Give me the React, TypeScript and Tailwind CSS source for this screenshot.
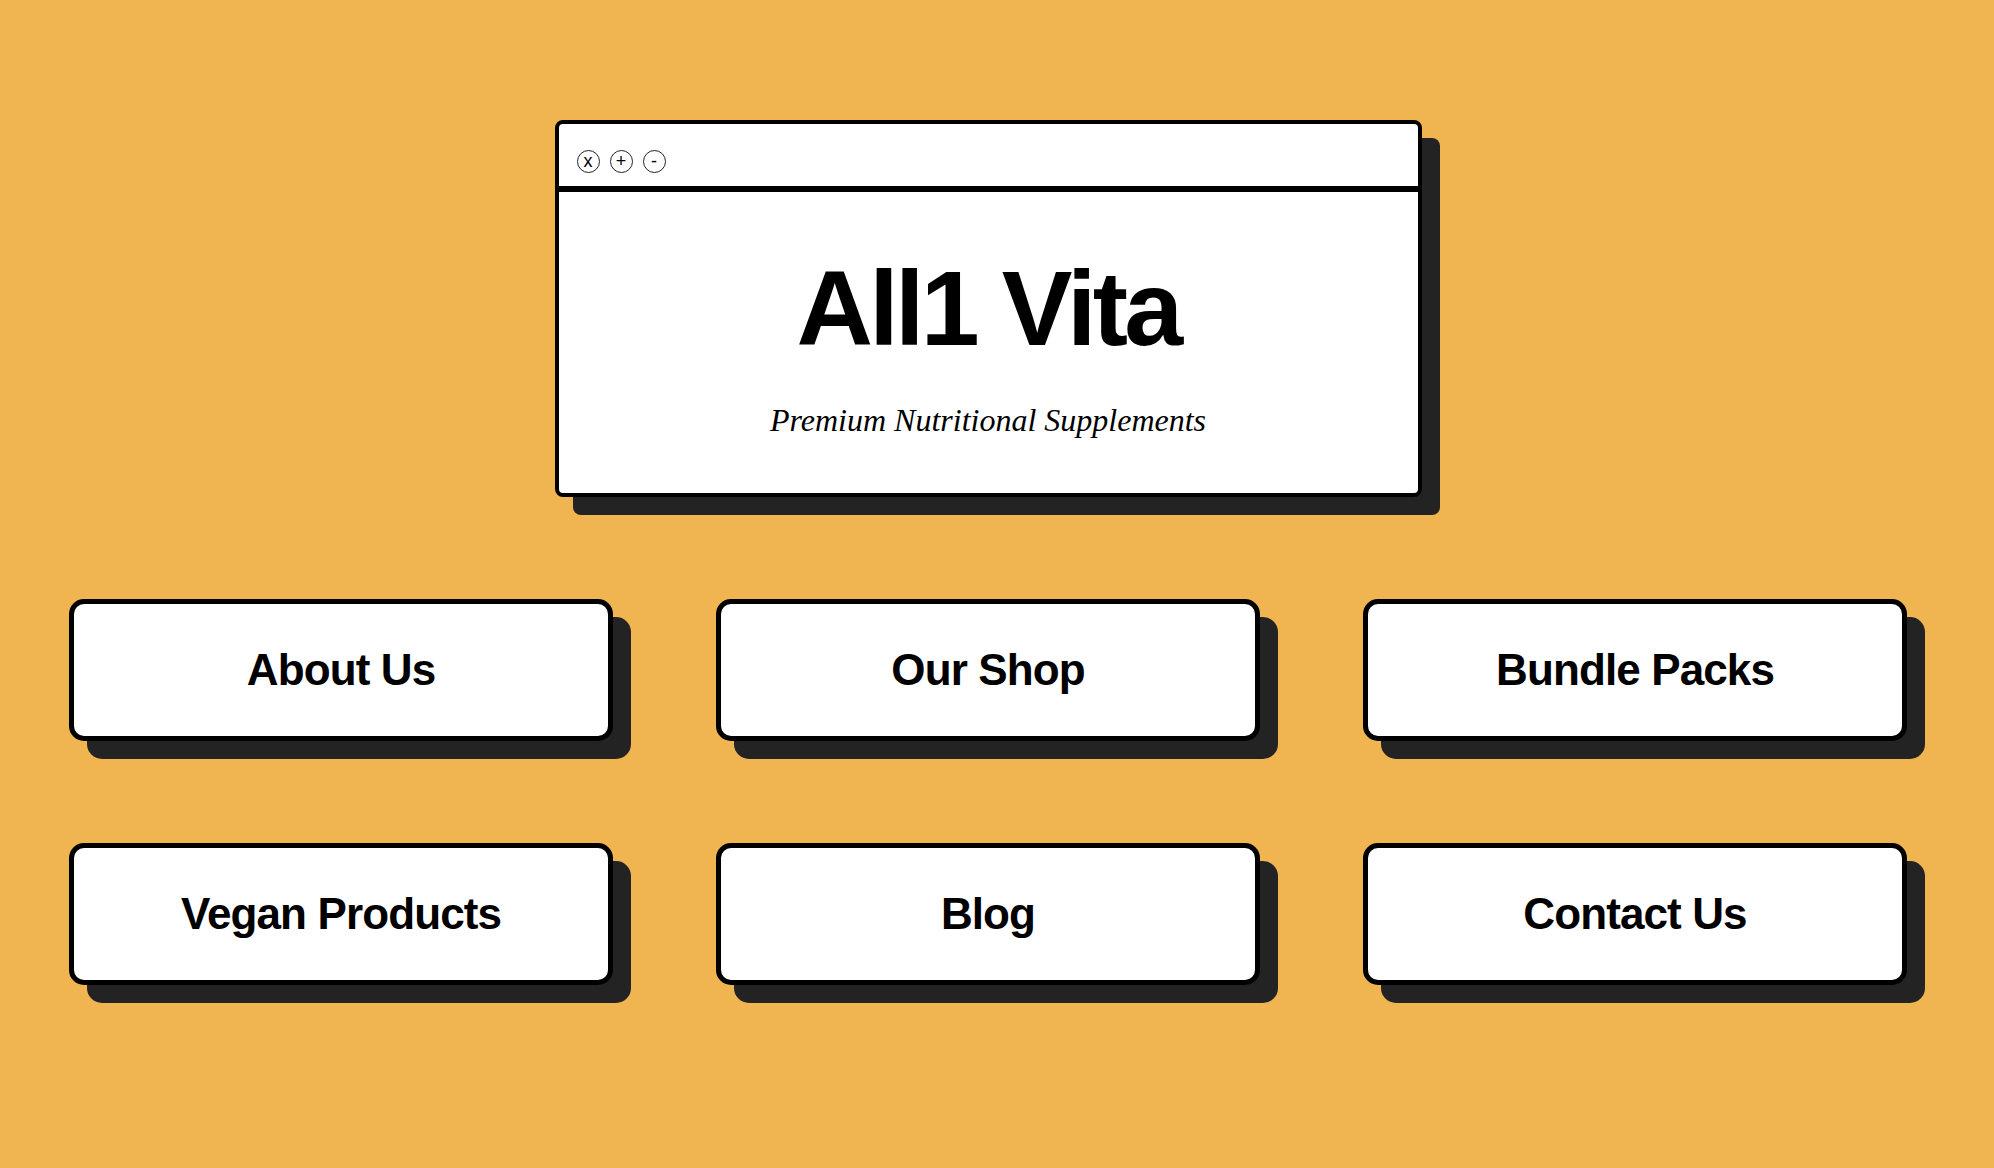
import React from "react";

const links = ["About Us", "Our Shop", "Bundle Packs", "Vegan Products", "Blog", "Contact Us"];

export default function App() {
  return (
    <div className="min-h-[1168px] w-full bg-[#F0B550] pt-[120px] pr-[18px] flex flex-col items-center" style={{ fontFamily: '"Liberation Sans", Arial, sans-serif' }}>
      <div className="w-[867px] bg-white border-4 border-black rounded-[8px] shadow-[18px_18px_0_0_#232323] overflow-hidden">
        <div className="h-[68px] border-b-[6px] border-black flex items-start pt-[26px] pl-[18px] gap-[10px]">
          {["x", "+", "-"].map((c) => (
            <div key={c} className="w-[23px] h-[23px] rounded-full border border-[#222] flex items-center justify-center text-[18px] leading-none text-black" style={{ fontFamily: '"Liberation Sans", Arial, sans-serif' }}>
              <span className="-mt-[2px]">{c}</span>
            </div>
          ))}
        </div>
        <div className="h-[301px] pt-[63px] flex flex-col items-center">
          <h1 className="text-[106px] leading-none font-bold tracking-[-0.035em] text-black">All1 Vita</h1>
          <p className="mt-[43px] text-[32px] leading-none italic text-black" style={{ fontFamily: '"Liberation Serif", "Times New Roman", serif' }}>
            Premium Nutritional Supplements
          </p>
        </div>
      </div>
      <div className="mt-[102px] grid grid-cols-[repeat(3,544px)] gap-x-[103px] gap-y-[102px]">
        {links.map((l) => (
          <a key={l} href="#" className="h-[142px] bg-white border-[5px] border-black rounded-[15px] shadow-[18px_18px_0_0_#232323] flex items-center justify-center text-[44px] font-bold tracking-[-0.02em] text-black">
            {l}
          </a>
        ))}
      </div>
    </div>
  );
}
